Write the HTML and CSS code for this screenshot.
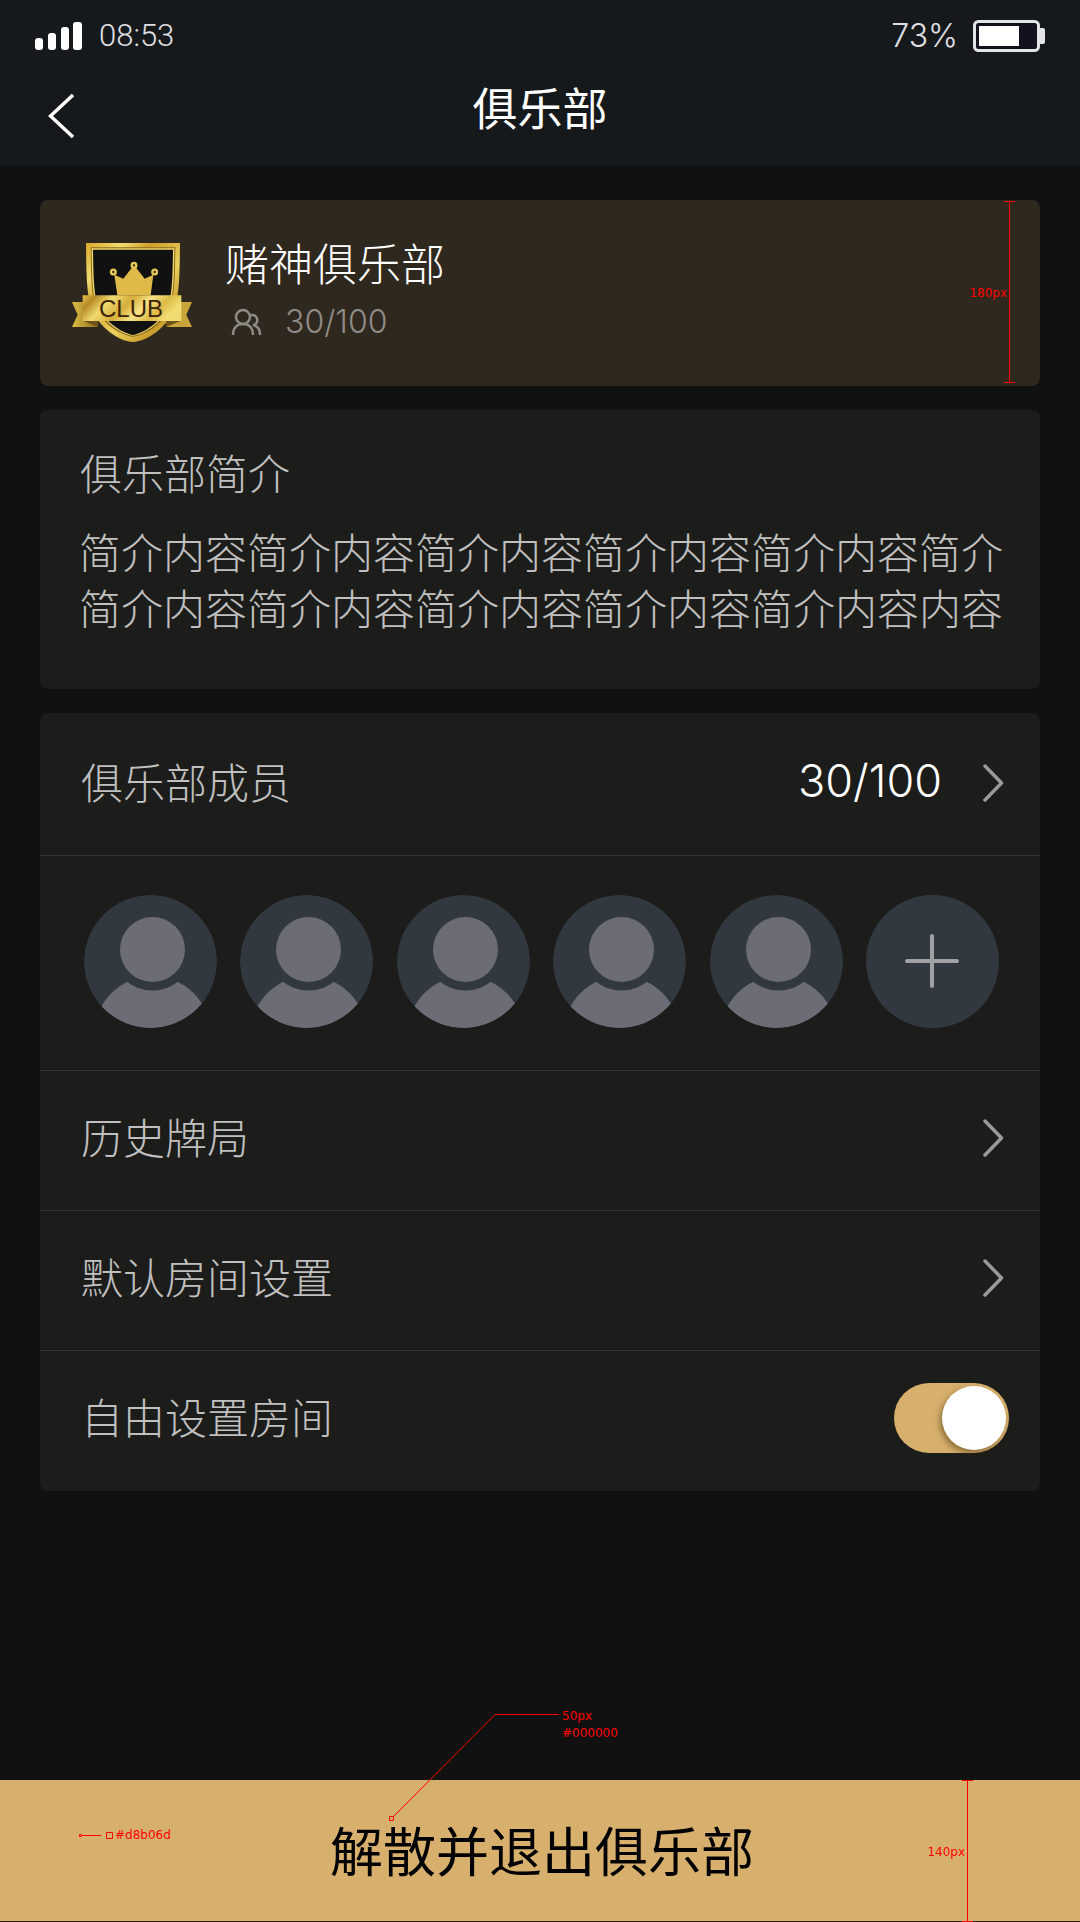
FILE: index.html
```html
<!DOCTYPE html>
<html lang="zh-CN">
<head>
<meta charset="utf-8">
<meta name="viewport" content="width=device-width, initial-scale=1">
<title>俱乐部</title>
<link rel="stylesheet" href="styles.css">
</head>
<body>
<svg class="defs" aria-hidden="true">
  <symbol id="avatar" viewBox="0 0 133 133">
    <clipPath id="round"><circle cx="66.5" cy="66.5" r="66.5"/></clipPath>
    <g clip-path="url(#round)">
      <rect width="133" height="133" fill="#32383f"/>
      <circle cx="68.5" cy="139" r="58" fill="#6b6c75"/>
      <circle cx="68.5" cy="54.5" r="41" fill="#32383f"/>
      <circle cx="68.5" cy="54.5" r="32.5" fill="#6b6c75"/>
    </g>
  </symbol>
  <symbol id="chevron" viewBox="0 0 21 38">
    <path d="M2 2 18.500 19 2 36" fill="none" stroke="#999" stroke-width="3.500" stroke-linecap="round" stroke-linejoin="round"/>
  </symbol>
</svg>

<header class="header">
  <div class="status">
    <svg class="signal" width="48" height="28" viewBox="0 0 48 28" fill="#fff" aria-hidden="true">
      <rect y="16" width="8" height="12" rx="3"/><rect x="13" y="11" width="8" height="17" rx="3"/><rect x="26" y="5" width="8" height="23" rx="3"/><rect x="38" width="9" height="28" rx="3"/>
    </svg>
    <span class="time">08:53</span>
    <span class="charge">73%</span>
    <svg width="72" height="32" viewBox="0 0 72 32" aria-hidden="true">
      <path d="M66 8h4a2 2 0 0 1 2 2v12a2 2 0 0 1-2 2h-4z" fill="#e4e4e8"/>
      <rect x="1.500" y="1.500" width="64" height="29" rx="4" fill="#12121f" stroke="#e4e4e8" stroke-width="3"/>
      <rect x="6" y="6" width="40" height="20" fill="#fff"/>
    </svg>
  </div>
  <nav class="nav">
    <button class="back" type="button" aria-label="返回">
      <svg width="27" height="46" viewBox="0 0 27 46" aria-hidden="true"><path d="M25 2 2.500 23 25 44" fill="none" stroke="#fff" stroke-width="3.500"/></svg>
    </button>
    <h1 class="title">俱乐部</h1>
  </nav>
</header>

<main class="content">
  <section class="card club">
    <svg class="badge" width="120" height="101" viewBox="36 36 360 303" aria-hidden="true">
      <defs>
        <linearGradient id="rim" x1="0" y1="0" x2="1" y2="1">
          <stop offset="0" stop-color="#d9a92d"/><stop offset=".2" stop-color="#f3dc70"/><stop offset=".35" stop-color="#cf9f2c"/><stop offset=".6" stop-color="#e9cf5c"/><stop offset=".8" stop-color="#c99d2d"/><stop offset="1" stop-color="#edd35d"/>
        </linearGradient>
        <linearGradient id="band" x1="0" y1="0" x2="1" y2=".25">
          <stop offset="0" stop-color="#e3c34a"/><stop offset=".13" stop-color="#b88a26"/><stop offset=".3" stop-color="#f0da70"/><stop offset=".5" stop-color="#d5ae3a"/><stop offset=".68" stop-color="#f5e384"/><stop offset=".85" stop-color="#dcba45"/><stop offset="1" stop-color="#f0dc70"/>
        </linearGradient>
        <linearGradient id="tail"><stop offset="0" stop-color="#dfbd43"/><stop offset="1" stop-color="#8f6d20"/></linearGradient>
      </defs>
      <path d="M78 39H360C359 110 360 180 345 235C322 290 265 334 219 336C173 334 116 290 93 235C78 180 79 110 78 39Z" fill="url(#rim)"/>
      <path d="M92 52H346C345 115 346 180 333 230C312 276 264 314 219 320C174 314 126 276 105 230C92 180 93 115 92 52Z" fill="#8b6b1b"/>
      <path d="M95 55H343C342 115 343 180 330 228C309 272 262 311 219 317C176 311 129 272 108 228C95 180 96 115 95 55Z" fill="#f0d66b"/>
      <path d="M99 59H339C338 115 338 180 326 228C306 270 260 307 219 315C178 307 132 270 112 228C100 180 100 115 99 59Z" fill="#111"/>
      <path d="M172 196 163 134 190 146 215 114H229L254 146 280 134 272 196Z" fill="#dfba49"/>
      <g fill="#352b18" stroke="#e7c958" stroke-width="7"><circle cx="160" cy="126" r="7"/><circle cx="222" cy="106" r="7"/><circle cx="284" cy="126" r="7"/></g>
      <path d="M36 216H69V272L112 281V291H36L53 254Z" fill="url(#tail)"/>
      <path d="M396 216H363V272L320 281V291H396L379 254Z" fill="#c9a438"/>
      <path d="M69 272H114V291ZM363 272H318V291Z" fill="#6f5217"/>
      <path d="M68 196H364V273H68Z" fill="url(#band)"/>
      <text class="badge-text" x="213" y="262" text-anchor="middle">CLUB</text>
    </svg>
    <div class="club-info">
      <h2 class="club-name">赌神俱乐部</h2>
      <p class="club-size">
        <svg width="32" height="28" viewBox="0 0 32 28" fill="none" stroke="#8f8b85" stroke-width="2.500" aria-hidden="true">
          <circle cx="12" cy="9" r="7"/><path d="M2 27C2 20 6 16 12 16S22 20 22 27M20 7C28 6 28 17 22 17C27 18 29 22 29 27"/>
        </svg>
        <span>30/100</span>
      </p>
    </div>
    <div class="note note-card"><span>180px</span><i class="measure"></i></div>
  </section>

  <section class="card intro">
    <h2 class="label">俱乐部简介</h2>
    <p class="intro-text">简介内容简介内容简介内容简介内容简介内容简介简介内容简介内容简介内容简介内容简介内容内容</p>
  </section>

  <section class="card list">
    <a class="row row-members" href="#members"><span class="label">俱乐部成员</span><span class="count">30/100</span><svg class="chevron"><use href="#chevron"/></svg></a>
    <div class="members">
      <svg class="avatar"><use href="#avatar"/></svg>
      <svg class="avatar"><use href="#avatar"/></svg>
      <svg class="avatar"><use href="#avatar"/></svg>
      <svg class="avatar"><use href="#avatar"/></svg>
      <svg class="avatar"><use href="#avatar"/></svg>
      <button class="avatar add" type="button" aria-label="添加成员">
        <svg width="54" height="54" viewBox="0 0 54 54" aria-hidden="true"><path d="M27 2V52M2 27H52" stroke="#a0a1a4" stroke-width="4" stroke-linecap="round"/></svg>
      </button>
    </div>
    <a class="row" href="#history"><span class="label">历史牌局</span><svg class="chevron"><use href="#chevron"/></svg></a>
    <a class="row" href="#defaults"><span class="label">默认房间设置</span><svg class="chevron"><use href="#chevron"/></svg></a>
    <div class="row row-switch"><label class="label" for="free">自由设置房间</label><input class="switch" id="free" type="checkbox" role="switch" checked></div>
  </section>
</main>

<footer class="footer">
  <button class="leave" type="button">解散并退出俱乐部</button>
  <div class="note note-color">
    <svg width="36" height="9" viewBox="0 0 36 9" fill="none" stroke="red" aria-hidden="true"><path d="M.5 3.500h2v2h-2zM3 4.500h19M27.500 1.500h6v6h-6z"/></svg><span>#d8b06d</span>
  </div>
  <div class="note note-font">
    <svg width="172" height="108" viewBox="0 0 172 108" fill="none" stroke="red" aria-hidden="true"><path d="M.5 103.500h4v4h-4zM5 103 106 1.500H170"/></svg>
    <span>50px<br>#000000</span>
  </div>
  <div class="note note-height"><span>140px</span><i class="measure"></i></div>
</footer>
</body>
</html>
```
FILE: styles.css
```css
* { box-sizing: border-box; margin: 0; padding: 0; }

body {
  display: flex;
  flex-direction: column;
  min-height: 100vh;
  background: #111;
  color: #c0c0c0;
  font-family: "Noto Sans CJK SC", sans-serif;
  font-weight: 300;
}

button { border: 0; background: none; font: inherit; color: inherit; cursor: pointer; }
a { color: inherit; text-decoration: none; }
svg { display: block; flex: none; }
.defs { position: absolute; width: 0; height: 0; }

.header { background: #15191c; color: #fff; }

.status {
  display: flex;
  align-items: center;
  height: 72px;
  padding: 0 35px;
  color: #e0e0e4;
}
.time { margin-left: 16px; font: 300 31px/40px Roboto, sans-serif; }
.charge { margin: 0 15px 0 auto; font: 300 32px/40px Inter, sans-serif; }

.nav {
  display: grid;
  grid-template-columns: 1fr auto 1fr;
  align-items: end;
  height: 94px;
  padding: 0 48px 27px;
}
.back { justify-self: start; }
.title { font-size: 45px; font-weight: 400; line-height: 64px; }

.content {
  display: flex;
  flex-direction: column;
  gap: 24px;
  padding: 34px 40px;
}

.card { border-radius: 8px; background: #1c1c1a; }

.club {
  position: relative;
  display: flex;
  align-items: center;
  gap: 33px;
  height: 186px;
  padding: 0 32px 2px;
  background: #2f281e;
}
.badge-text { font: 400 72px "Liberation Sans", sans-serif; fill: #3b2208; }
.club-name { color: #fff; font-size: 44px; font-weight: 300; line-height: 60px; }
.club-size {
  display: flex;
  align-items: center;
  gap: 22px;
  padding-left: 6px;
  color: #8f8b85;
  font: 300 32px/60px Inter, sans-serif;
}

.label { padding: 0 0 4px 1px; font-size: 42px; font-weight: 300; line-height: 56px; }

.intro { padding: 34px 37px 54px 39px; }
.intro-text { margin-top: 19px; font-size: 42px; line-height: 56px; }

.row {
  display: flex;
  align-items: center;
  justify-content: space-between;
  height: 140px;
  padding: 0 36px 6px 40px;
  border-bottom: 1px solid #333;
}
.row-members { height: 143px; padding-bottom: 2px; }
.row-switch { padding-right: 31px; border-bottom: 0; }
.count { margin: 0 41px 0 auto; padding-bottom: 4px; color: #fff; font: 300 45px/56px Inter, sans-serif; }
.chevron { width: 21px; height: 38px; }

.members {
  display: flex;
  align-items: center;
  justify-content: space-between;
  height: 215px;
  padding: 0 41px 4px 44px;
  border-bottom: 1px solid #333;
}
.avatar { width: 133px; height: 133px; border-radius: 50%; }
.add { display: grid; place-items: center; background: #32383f; }

.switch {
  appearance: none;
  width: 115px;
  height: 70px;
  padding: 3px;
  border-radius: 35px;
  background: #555;
  cursor: pointer;
}
.switch::before {
  content: "";
  display: block;
  width: 64px;
  height: 64px;
  border-radius: 50%;
  background: #fff;
  box-shadow: -2px 3px 6px rgba(60, 40, 0, .5);
}
.switch:checked { background: #d8b06d; }
.switch:checked::before { margin-left: auto; }

.footer {
  position: relative;
  margin-top: auto;
  border-bottom: 1px solid #2a2419;
}
.leave {
  display: block;
  width: 100%;
  height: 141px;
  padding: 0 0 4px 4px;
  background: #d8b06d;
  color: #000;
  font-size: 53px;
  font-weight: 400;
  line-height: 76px;
}

/* Red design annotations laid over the page */
.note {
  position: absolute;
  display: flex;
  color: red;
  font: 400 12px/17px "DejaVu Sans", sans-serif;
  pointer-events: none;
}
.measure {
  width: 11px;
  border: solid red;
  border-width: 1px 0;
  background: linear-gradient(red, red) center / 1px 100% no-repeat;
}
.note-card, .note-height { align-items: center; }
.note-card span, .note-height span { padding-top: 2px; }
.note-card .measure, .note-height .measure { align-self: stretch; margin-left: -3px; }
.note-card { top: 1px; right: 25px; height: 182px; }
.note-height { top: 0; right: 107px; height: 142px; }
.note-color { top: 47px; left: 79px; align-items: center; }
.note-font { top: -67px; left: calc(50% - 151px); gap: 1px; }
.note-font span { margin-top: -5px; }
```
